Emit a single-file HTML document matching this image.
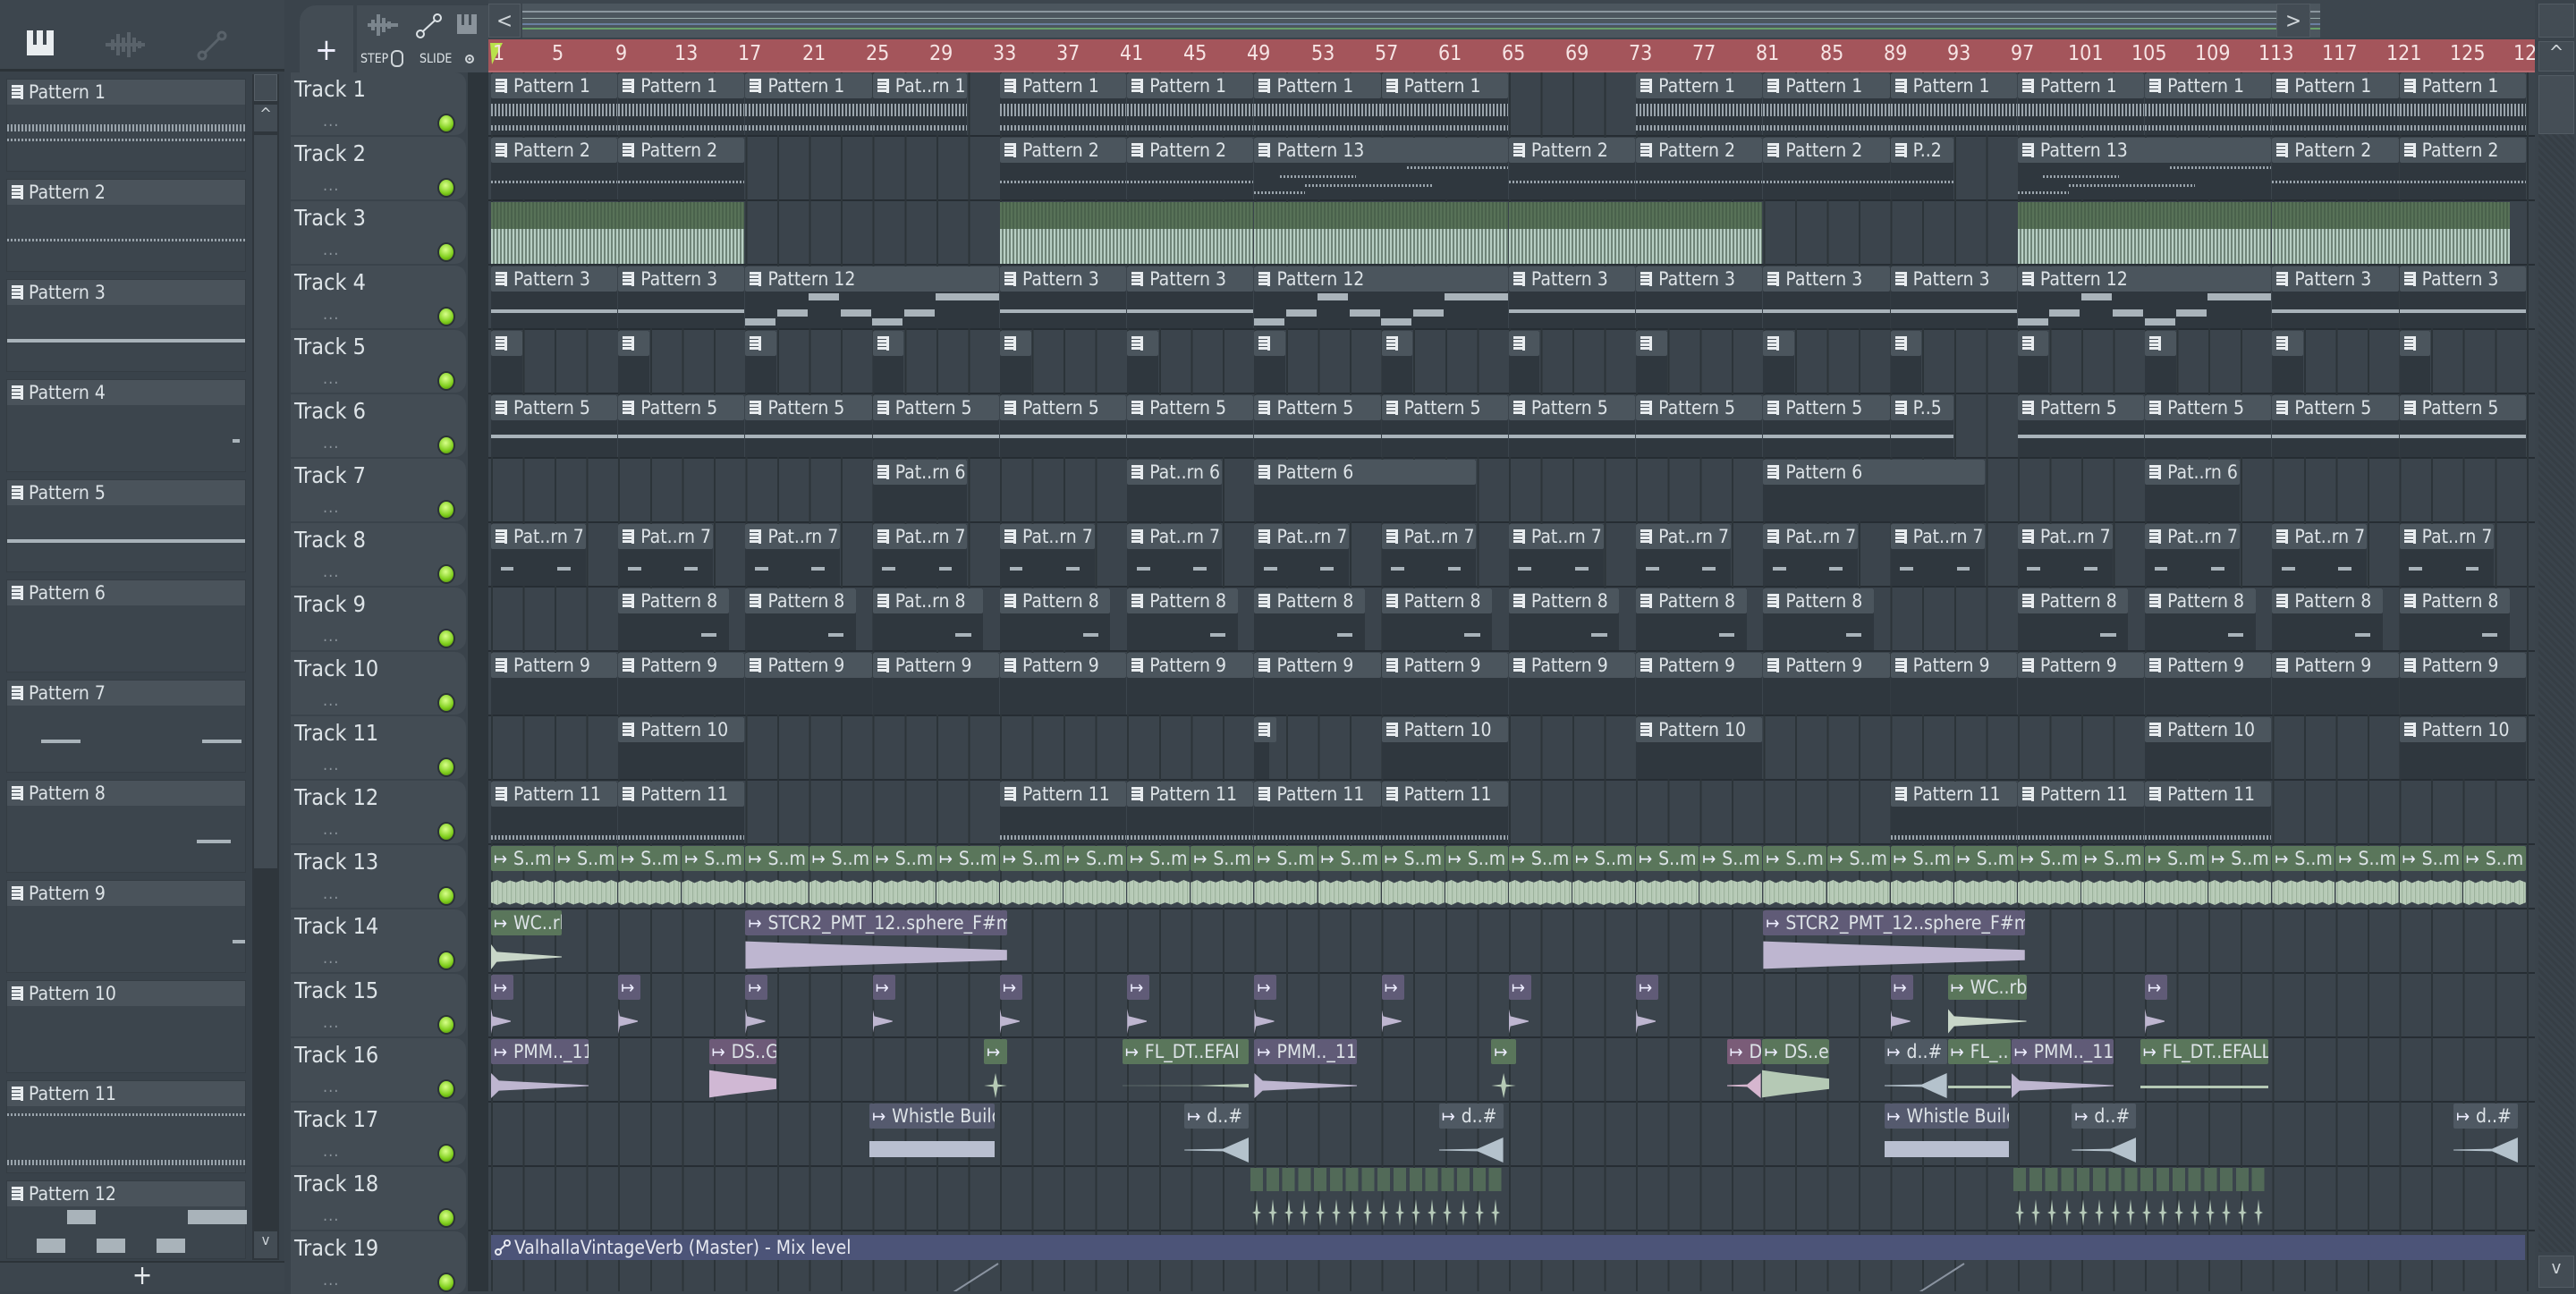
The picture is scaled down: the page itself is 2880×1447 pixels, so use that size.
<!DOCTYPE html>
<html><head><meta charset="utf-8"><style>
*{margin:0;padding:0;box-sizing:border-box}
body{width:2880px;height:1444px;overflow:hidden;background:#3a434b;font-family:"DejaVu Sans Condensed","Liberation Sans Narrow","Liberation Sans",sans-serif;color:#dde3e7;position:relative}
.abs{position:absolute}
#left{left:0;top:0;width:318px;height:1444px;background:#39424a}
#ltool{left:0;top:0;width:318px;height:80px;background:#3d464e;border-bottom:3px solid #2c3338}
.pi{left:7px;width:268px;height:104px;background:#3c454d;border:1px solid #343c43}
.pi b{display:block;height:28px;background:#4a535b;font-weight:normal;font-size:21px;line-height:28px;padding-left:24px;position:relative;color:#dde3e7}
.pi b::before,.c b::before{content:"";position:absolute;left:5px;top:6px;width:10px;height:16px;background:repeating-linear-gradient(#e8ecef 0 3px,#4a535b 3px 4px);border-right:3px solid #e8ecef}
#lsb{left:282px;top:83px;width:30px;height:1326px;background:#2f363c}
#tracks{left:323px;top:81px;width:200px;height:1363px}
.th{position:absolute;left:2px;width:196px;height:70px;background:#434c54;border-radius:0 12px 12px 0}
.th span{position:absolute;left:4px;top:4px;font-size:25px}
.th i{position:absolute;left:36px;top:44px;font-style:normal;font-size:18px;color:#8a939b;letter-spacing:1px}
.th u{position:absolute;left:164px;top:46px;width:20px;height:22px;border-radius:50%;background:radial-gradient(circle at 45% 35%,#d8ff8a,#7fce1c 60%,#4a7a10);border:2px solid #2a3136}
#strip{left:523px;top:81px;width:23px;height:1363px;background:#2d353b}
#ruler{left:546px;top:44px;width:2288px;height:37px;background:#a4555b;overflow:hidden;border-bottom:2px solid #b56a70}
#ruler span{position:absolute;top:3px;font-size:23px;color:#f6e4e4}
#over{left:546px;top:0;width:2288px;height:42px;background:#3d464e}
#grid{left:546px;top:81px;width:2288px;height:1363px;overflow:hidden;
background:repeating-linear-gradient(90deg,transparent 0 3px,#2c3439 3px 5px,transparent 5px 35.56px),
repeating-linear-gradient(transparent 0 70px,#262d33 70px 72px),#3b444c}
.r{position:absolute;left:0;width:2288px;height:72px}
.c{position:absolute;top:1px;height:69px;left:calc(3px + (var(--b) - 1)*17.78px);width:calc(var(--w)*17.78px - 1px);background:#2f373e}
.c b{display:block;height:28px;background:#4b555d;font-weight:normal;font-size:21px;line-height:28px;padding-left:25px;white-space:nowrap;overflow:hidden;position:relative;border-radius:2px;color:#dde3e7}
.c.a b::before,.c.u b::before,.c.g b::before,.c.k b::before{content:"↦";background:none;border:0;width:auto;height:auto;top:0;left:3px;font-size:20px;color:#eef}
.a{background:transparent}.a b{background:#5a765b}
.u{background:transparent}.u b{background:#605b77}
.k{background:transparent}.k b{background:#4f5963}
.wav{position:absolute;left:0;right:0;top:38px;height:28px;background:#b5c9b5}
.t13{background:repeating-linear-gradient(90deg,#b9ccb9 0 2px,#9cb29c 2px 3px,#b5c9b5 3px 5px);clip-path:polygon(0 10%,10% 0,20% 12%,30% 2%,40% 10%,50% 0,60% 8%,70% 2%,80% 12%,90% 0,100% 10%,100% 90%,90% 100%,80% 88%,70% 98%,60% 90%,50% 100%,40% 90%,30% 98%,20% 88%,10% 100%,0 90%)}
.u .wav{background:#beb6d0}
.k .wav{background:#b4c2cc}
.dec{clip-path:polygon(0 0,8% 30%,100% 48%,100% 52%,8% 70%,0 100%)}
.ris{clip-path:polygon(0 48%,60% 45%,100% 0,100% 100%,60% 55%,0 52%)}
.swl{top:34px;height:32px;clip-path:polygon(0 2%,30% 12%,100% 32%,100% 68%,30% 88%,0 98%)}
.dash{position:absolute;left:0;right:0;height:3px;background:repeating-linear-gradient(90deg,#9aa4ac 0 2px,transparent 2px 4px)}
.ln{position:absolute;height:4px;background:#a9b3ba}
.sp{position:absolute;top:36px;width:10px;height:30px;background:#b5c9b8;clip-path:polygon(50% 0,65% 45%,100% 50%,65% 55%,50% 100%,35% 55%,0 50%,35% 45%)}
</style></head><body>

<div id="left" class="abs">
 <div id="ltool" class="abs">
  <svg class="abs" style="left:30px;top:34px" width="30" height="30"><rect x="0" y="0" width="30" height="28" fill="#e8ecef"/><rect x="7" y="0" width="4" height="16" fill="#3d464e"/><rect x="18" y="0" width="4" height="16" fill="#3d464e"/></svg>
  <svg class="abs" style="left:118px;top:34px" width="44" height="32"><path d="M0 16h44M8 10v12M14 4v24M20 8v16M26 2v28M32 8v16M38 12v8" stroke="#59626a" stroke-width="4"/></svg>
  <svg class="abs" style="left:220px;top:34px" width="34" height="34"><circle cx="6" cy="28" r="4" fill="none" stroke="#59626a" stroke-width="3"/><circle cx="28" cy="6" r="4" fill="none" stroke="#59626a" stroke-width="3"/><path d="M9 25L25 9" stroke="#59626a" stroke-width="3"/></svg>
 </div>
 <div class="pi abs" style="top:88px"><b>Pattern 1</b><div class="dash" style="top:50px;height:8px"></div><div class="dash" style="top:66px"></div></div>
 <div class="pi abs" style="top:200px"><b>Pattern 2</b><div class="dash" style="top:66px"></div></div>
 <div class="pi abs" style="top:312px"><b>Pattern 3</b><div class="ln" style="top:66px;left:0;right:0"></div></div>
 <div class="pi abs" style="top:424px"><b>Pattern 4</b><div class="ln" style="top:66px;left:252px;width:8px"></div></div>
 <div class="pi abs" style="top:536px"><b>Pattern 5</b><div class="ln" style="top:66px;left:0;right:0"></div></div>
 <div class="pi abs" style="top:648px"><b>Pattern 6</b></div>
 <div class="pi abs" style="top:760px"><b>Pattern 7</b><div class="ln" style="top:66px;left:38px;width:44px"></div><div class="ln" style="top:66px;left:218px;width:44px"></div></div>
 <div class="pi abs" style="top:872px"><b>Pattern 8</b><div class="ln" style="top:66px;left:212px;width:38px"></div></div>
 <div class="pi abs" style="top:984px"><b>Pattern 9</b><div class="ln" style="top:66px;left:252px;width:14px"></div></div>
 <div class="pi abs" style="top:1096px"><b>Pattern 10</b></div>
 <div class="pi abs" style="top:1208px"><b>Pattern 11</b><div class="dash" style="top:36px"></div><div class="dash" style="top:88px;height:6px"></div></div>
 <div class="pi abs" style="top:1320px;height:88px"><b>Pattern 12</b><div class="ln" style="top:32px;left:67px;width:32px;height:16px"></div><div class="ln" style="top:32px;left:202px;width:66px;height:16px"></div><div class="ln" style="top:64px;left:33px;width:32px;height:16px"></div><div class="ln" style="top:64px;left:100px;width:32px;height:16px"></div><div class="ln" style="top:64px;left:167px;width:32px;height:16px"></div></div>
 <div id="lsb" class="abs"><div class="abs" style="left:2px;top:0;width:26px;height:30px;background:#434c54;border:1px solid #555e66"></div><div class="abs" style="left:2px;top:34px;width:26px;height:30px;background:#434c54;color:#cfd5d9;font-size:18px;text-align:center">^</div><div class="abs" style="left:2px;top:68px;width:26px;height:820px;background:#414a52"></div><div class="abs" style="left:2px;top:1294px;width:26px;height:30px;background:#434c54;color:#cfd5d9;font-size:16px;text-align:center">v</div></div>
 <div class="abs" style="left:0;top:1410px;width:318px;height:34px;background:#3c454d;border-top:2px solid #2c3338;text-align:center;font-size:30px;line-height:30px;color:#e6eaed">+</div>
</div>

<div class="abs" style="left:323px;top:0;width:223px;height:81px;background:#3a434b">
 <div class="abs" style="left:12px;top:6px;width:60px;height:75px;background:#434c54;border-radius:18px 0 0 0;text-align:center;font-size:34px;line-height:100px;color:#eef">+</div>
 <div class="abs" style="left:76px;top:6px;width:147px;height:75px;background:#434c54">
  <svg class="abs" style="left:8px;top:8px" width="130" height="30"><path d="M4 14h34M10 8v12M16 2v24M22 6v16M28 10v8" stroke="#7b858d" stroke-width="4"/><circle cx="63" cy="24" r="4" fill="none" stroke="#dde3e7" stroke-width="2"/><circle cx="82" cy="6" r="4" fill="none" stroke="#dde3e7" stroke-width="2"/><path d="M66 21L79 9" stroke="#dde3e7" stroke-width="2"/><rect x="104" y="2" width="22" height="22" fill="#8a939b"/><rect x="109" y="2" width="3" height="12" fill="#434c54"/><rect x="117" y="2" width="3" height="12" fill="#434c54"/></svg>
  <span class="abs" style="left:4px;top:52px;font-size:14px">STEP</span><span class="abs" style="left:38px;top:50px;width:14px;height:19px;border:2px solid #cfd5d9;border-radius:6px"></span>
  <span class="abs" style="left:70px;top:52px;font-size:14px">SLIDE</span><span class="abs" style="left:121px;top:55px;width:10px;height:10px;border:2px solid #cfd5d9;border-radius:50%;background:radial-gradient(#cfd5d9 30%,transparent 40%)"></span>
 </div>
</div>

<div id="over" class="abs">
 <div class="abs" style="left:0;top:4px;width:36px;height:38px;background:#434c54;border:1px solid #525b63;color:#cfd5d9;font-size:24px;text-align:center;line-height:36px">&lt;</div>
 <div class="abs" style="left:38px;top:4px;width:2010px;height:38px;background:#4c565e;background-image:linear-gradient(transparent 8px,#8b969e 8px 10px,transparent 10px 16px,#9aa 16px 17px,transparent 17px 22px,#6a7fa0 22px 24px,transparent 24px 27px,#69a06a 27px 29px,transparent 29px)"></div>
 <div class="abs" style="left:1999px;top:4px;width:38px;height:38px;background:#434c54;border:1px solid #525b63;color:#cfd5d9;font-size:24px;text-align:center;line-height:36px">&gt;</div>
</div>
<div class="abs" style="left:2834px;top:0;width:46px;height:1444px;background:#3a434b">
 <div class="abs" style="left:4px;top:4px;width:40px;height:38px;background:#434c54;border:1px solid #525b63"></div>
 <div class="abs" style="left:4px;top:46px;width:40px;height:34px;background:#434c54;border:1px solid #525b63;color:#cfd5d9;text-align:center;font-size:22px">^</div>
 <div class="abs" style="left:4px;top:84px;width:40px;height:66px;background:#454e56;border:1px solid #525b63"></div>
 <div class="abs" style="left:4px;top:150px;width:40px;height:1250px;background:repeating-linear-gradient(45deg,#363e45 0 3px,#3a434b 3px 6px)"></div>
 <div class="abs" style="left:4px;top:1404px;width:40px;height:36px;background:#434c54;border:1px solid #525b63;color:#cfd5d9;text-align:center;font-size:20px">v</div>
</div>

<div id="ruler" class="abs">
<svg class="abs" style="left:0;top:4px" width="18" height="26"><path d="M2 0h14L4 24z" fill="#b9e24a"/></svg>
<span style="left:5px">1</span><span style="left:71px">5</span><span style="left:142px">9</span><span style="left:208px">13</span><span style="left:279px">17</span><span style="left:351px">21</span><span style="left:422px">25</span><span style="left:493px">29</span><span style="left:564px">33</span><span style="left:635px">37</span><span style="left:706px">41</span><span style="left:777px">45</span><span style="left:848px">49</span><span style="left:920px">53</span><span style="left:991px">57</span><span style="left:1062px">61</span><span style="left:1133px">65</span><span style="left:1204px">69</span><span style="left:1275px">73</span><span style="left:1346px">77</span><span style="left:1417px">81</span><span style="left:1489px">85</span><span style="left:1560px">89</span><span style="left:1631px">93</span><span style="left:1702px">97</span><span style="left:1766px">101</span><span style="left:1837px">105</span><span style="left:1908px">109</span><span style="left:1979px">113</span><span style="left:2050px">117</span><span style="left:2122px">121</span><span style="left:2193px">125</span><span style="left:2264px">129</span>
</div>

<div id="strip" class="abs"></div>
<div id="tracks" class="abs">
<div class="th" style="top:0"><span>Track 1</span><i>...</i><u></u></div>
<div class="th" style="top:72px"><span>Track 2</span><i>...</i><u></u></div>
<div class="th" style="top:144px"><span>Track 3</span><i>...</i><u></u></div>
<div class="th" style="top:216px"><span>Track 4</span><i>...</i><u></u></div>
<div class="th" style="top:288px"><span>Track 5</span><i>...</i><u></u></div>
<div class="th" style="top:360px"><span>Track 6</span><i>...</i><u></u></div>
<div class="th" style="top:432px"><span>Track 7</span><i>...</i><u></u></div>
<div class="th" style="top:504px"><span>Track 8</span><i>...</i><u></u></div>
<div class="th" style="top:576px"><span>Track 9</span><i>...</i><u></u></div>
<div class="th" style="top:648px"><span>Track 10</span><i>...</i><u></u></div>
<div class="th" style="top:720px"><span>Track 11</span><i>...</i><u></u></div>
<div class="th" style="top:792px"><span>Track 12</span><i>...</i><u></u></div>
<div class="th" style="top:864px"><span>Track 13</span><i>...</i><u></u></div>
<div class="th" style="top:936px"><span>Track 14</span><i>...</i><u></u></div>
<div class="th" style="top:1008px"><span>Track 15</span><i>...</i><u></u></div>
<div class="th" style="top:1080px"><span>Track 16</span><i>...</i><u></u></div>
<div class="th" style="top:1152px"><span>Track 17</span><i>...</i><u></u></div>
<div class="th" style="top:1224px"><span>Track 18</span><i>...</i><u></u></div>
<div class="th" style="top:1296px"><span>Track 19</span><i>...</i><u></u></div>
</div>

<div id="grid" class="abs">
<!-- Track 1 -->
<div class="r" style="top:0">
<div class="c" style="--b:1;--w:8"><b>Pattern 1</b><div class="dash" style="top:34px;height:14px"></div><div class="dash" style="top:58px;height:6px"></div></div>
<div class="c" style="--b:9;--w:8"><b>Pattern 1</b><div class="dash" style="top:34px;height:14px"></div><div class="dash" style="top:58px;height:6px"></div></div>
<div class="c" style="--b:17;--w:8"><b>Pattern 1</b><div class="dash" style="top:34px;height:14px"></div><div class="dash" style="top:58px;height:6px"></div></div>
<div class="c" style="--b:25;--w:6"><b>Pat..rn 1</b><div class="dash" style="top:34px;height:14px"></div><div class="dash" style="top:58px;height:6px"></div></div>
<div class="c" style="--b:33;--w:8"><b>Pattern 1</b><div class="dash" style="top:34px;height:14px"></div><div class="dash" style="top:58px;height:6px"></div></div>
<div class="c" style="--b:41;--w:8"><b>Pattern 1</b><div class="dash" style="top:34px;height:14px"></div><div class="dash" style="top:58px;height:6px"></div></div>
<div class="c" style="--b:49;--w:8"><b>Pattern 1</b><div class="dash" style="top:34px;height:14px"></div><div class="dash" style="top:58px;height:6px"></div></div>
<div class="c" style="--b:57;--w:8"><b>Pattern 1</b><div class="dash" style="top:34px;height:14px"></div><div class="dash" style="top:58px;height:6px"></div></div>
<div class="c" style="--b:73;--w:8"><b>Pattern 1</b><div class="dash" style="top:34px;height:14px"></div><div class="dash" style="top:58px;height:6px"></div></div>
<div class="c" style="--b:81;--w:8"><b>Pattern 1</b><div class="dash" style="top:34px;height:14px"></div><div class="dash" style="top:58px;height:6px"></div></div>
<div class="c" style="--b:89;--w:8"><b>Pattern 1</b><div class="dash" style="top:34px;height:14px"></div><div class="dash" style="top:58px;height:6px"></div></div>
<div class="c" style="--b:97;--w:8"><b>Pattern 1</b><div class="dash" style="top:34px;height:14px"></div><div class="dash" style="top:58px;height:6px"></div></div>
<div class="c" style="--b:105;--w:8"><b>Pattern 1</b><div class="dash" style="top:34px;height:14px"></div><div class="dash" style="top:58px;height:6px"></div></div>
<div class="c" style="--b:113;--w:8"><b>Pattern 1</b><div class="dash" style="top:34px;height:14px"></div><div class="dash" style="top:58px;height:6px"></div></div>
<div class="c" style="--b:121;--w:8"><b>Pattern 1</b><div class="dash" style="top:34px;height:14px"></div><div class="dash" style="top:58px;height:6px"></div></div>
</div>
<!-- Track 2 -->
<div class="r" style="top:72px">
<div class="c" style="--b:1;--w:8"><b>Pattern 2</b><div class="dash" style="top:48px"></div></div>
<div class="c" style="--b:9;--w:8"><b>Pattern 2</b><div class="dash" style="top:48px"></div></div>
<div class="c" style="--b:33;--w:8"><b>Pattern 2</b><div class="dash" style="top:48px"></div></div>
<div class="c" style="--b:41;--w:8"><b>Pattern 2</b><div class="dash" style="top:48px"></div></div>
<div class="c" style="--b:49;--w:16"><b>Pattern 13</b><div class="dash" style="top:32px;left:60%"></div><div class="dash" style="top:42px;left:10%;right:60%"></div><div class="dash" style="top:52px;left:20%;right:30%"></div><div class="dash" style="top:60px;left:0;right:80%"></div></div>
<div class="c" style="--b:65;--w:8"><b>Pattern 2</b><div class="dash" style="top:48px"></div></div>
<div class="c" style="--b:73;--w:8"><b>Pattern 2</b><div class="dash" style="top:48px"></div></div>
<div class="c" style="--b:81;--w:8"><b>Pattern 2</b><div class="dash" style="top:48px"></div></div>
<div class="c" style="--b:89;--w:4"><b>P..2</b><div class="dash" style="top:48px"></div></div>
<div class="c" style="--b:97;--w:16"><b>Pattern 13</b><div class="dash" style="top:32px;left:60%"></div><div class="dash" style="top:42px;left:10%;right:60%"></div><div class="dash" style="top:52px;left:20%;right:30%"></div><div class="dash" style="top:60px;left:0;right:80%"></div></div>
<div class="c" style="--b:113;--w:8"><b>Pattern 2</b><div class="dash" style="top:48px"></div></div>
<div class="c" style="--b:121;--w:8"><b>Pattern 2</b><div class="dash" style="top:48px"></div></div>
</div>
<!-- Track 3 -->
<div class="r" style="top:144px">
<div class="c" style="--b:1;--w:16;background:repeating-linear-gradient(90deg,#b8cfc4 0 2px,#6f8478 2px 4px)"><div style="height:30px;background:repeating-linear-gradient(90deg,#587258 0 2px,#4a624c 2px 4px)"></div></div>
<div class="c" style="--b:33;--w:16;background:repeating-linear-gradient(90deg,#b8cfc4 0 2px,#6f8478 2px 4px)"><div style="height:30px;background:repeating-linear-gradient(90deg,#587258 0 2px,#4a624c 2px 4px)"></div></div>
<div class="c" style="--b:49;--w:16;background:repeating-linear-gradient(90deg,#b8cfc4 0 2px,#6f8478 2px 4px)"><div style="height:30px;background:repeating-linear-gradient(90deg,#587258 0 2px,#4a624c 2px 4px)"></div></div>
<div class="c" style="--b:65;--w:16;background:repeating-linear-gradient(90deg,#b8cfc4 0 2px,#6f8478 2px 4px)"><div style="height:30px;background:repeating-linear-gradient(90deg,#587258 0 2px,#4a624c 2px 4px)"></div></div>
<div class="c" style="--b:97;--w:16;background:repeating-linear-gradient(90deg,#b8cfc4 0 2px,#6f8478 2px 4px)"><div style="height:30px;background:repeating-linear-gradient(90deg,#587258 0 2px,#4a624c 2px 4px)"></div></div>
<div class="c" style="--b:113;--w:15;background:repeating-linear-gradient(90deg,#b8cfc4 0 2px,#6f8478 2px 4px)"><div style="height:30px;background:repeating-linear-gradient(90deg,#587258 0 2px,#4a624c 2px 4px)"></div></div>
</div>
<!-- Track 4 -->
<div class="r" style="top:216px">
<div class="c" style="--b:1;--w:8"><b>Pattern 3</b><div class="ln" style="top:48px;left:0;right:0"></div></div>
<div class="c" style="--b:9;--w:8"><b>Pattern 3</b><div class="ln" style="top:48px;left:0;right:0"></div></div>
<div class="c" style="--b:17;--w:16"><b>Pattern 12</b><div class="ln" style="top:58px;left:0;width:12%;height:8px"></div><div class="ln" style="top:48px;left:12.5%;width:12%;height:8px"></div><div class="ln" style="top:30px;left:25%;width:12%;height:8px"></div><div class="ln" style="top:48px;left:37.5%;width:12%;height:8px"></div><div class="ln" style="top:58px;left:50%;width:12%;height:8px"></div><div class="ln" style="top:48px;left:62.5%;width:12%;height:8px"></div><div class="ln" style="top:30px;left:75%;width:25%;height:8px"></div></div>
<div class="c" style="--b:33;--w:8"><b>Pattern 3</b><div class="ln" style="top:48px;left:0;right:0"></div></div>
<div class="c" style="--b:41;--w:8"><b>Pattern 3</b><div class="ln" style="top:48px;left:0;right:0"></div></div>
<div class="c" style="--b:49;--w:16"><b>Pattern 12</b><div class="ln" style="top:58px;left:0;width:12%;height:8px"></div><div class="ln" style="top:48px;left:12.5%;width:12%;height:8px"></div><div class="ln" style="top:30px;left:25%;width:12%;height:8px"></div><div class="ln" style="top:48px;left:37.5%;width:12%;height:8px"></div><div class="ln" style="top:58px;left:50%;width:12%;height:8px"></div><div class="ln" style="top:48px;left:62.5%;width:12%;height:8px"></div><div class="ln" style="top:30px;left:75%;width:25%;height:8px"></div></div>
<div class="c" style="--b:65;--w:8"><b>Pattern 3</b><div class="ln" style="top:48px;left:0;right:0"></div></div>
<div class="c" style="--b:73;--w:8"><b>Pattern 3</b><div class="ln" style="top:48px;left:0;right:0"></div></div>
<div class="c" style="--b:81;--w:8"><b>Pattern 3</b><div class="ln" style="top:48px;left:0;right:0"></div></div>
<div class="c" style="--b:89;--w:8"><b>Pattern 3</b><div class="ln" style="top:48px;left:0;right:0"></div></div>
<div class="c" style="--b:97;--w:16"><b>Pattern 12</b><div class="ln" style="top:58px;left:0;width:12%;height:8px"></div><div class="ln" style="top:48px;left:12.5%;width:12%;height:8px"></div><div class="ln" style="top:30px;left:25%;width:12%;height:8px"></div><div class="ln" style="top:48px;left:37.5%;width:12%;height:8px"></div><div class="ln" style="top:58px;left:50%;width:12%;height:8px"></div><div class="ln" style="top:48px;left:62.5%;width:12%;height:8px"></div><div class="ln" style="top:30px;left:75%;width:25%;height:8px"></div></div>
<div class="c" style="--b:113;--w:8"><b>Pattern 3</b><div class="ln" style="top:48px;left:0;right:0"></div></div>
<div class="c" style="--b:121;--w:8"><b>Pattern 3</b><div class="ln" style="top:48px;left:0;right:0"></div></div>
</div>
<!-- Track 5 -->
<div class="r" style="top:288px">
<div class="c" style="--b:1;--w:2"><b></b></div><div class="c" style="--b:9;--w:2"><b></b></div><div class="c" style="--b:17;--w:2"><b></b></div><div class="c" style="--b:25;--w:2"><b></b></div><div class="c" style="--b:33;--w:2"><b></b></div><div class="c" style="--b:41;--w:2"><b></b></div><div class="c" style="--b:49;--w:2"><b></b></div><div class="c" style="--b:57;--w:2"><b></b></div><div class="c" style="--b:65;--w:2"><b></b></div><div class="c" style="--b:73;--w:2"><b></b></div><div class="c" style="--b:81;--w:2"><b></b></div><div class="c" style="--b:89;--w:2"><b></b></div><div class="c" style="--b:97;--w:2"><b></b></div><div class="c" style="--b:105;--w:2"><b></b></div><div class="c" style="--b:113;--w:2"><b></b></div><div class="c" style="--b:121;--w:2"><b></b></div>
</div>
<!-- Track 6 -->
<div class="r" style="top:360px">
<div class="c" style="--b:1;--w:8"><b>Pattern 5</b><div class="ln" style="top:44px;left:0;right:0"></div></div>
<div class="c" style="--b:9;--w:8"><b>Pattern 5</b><div class="ln" style="top:44px;left:0;right:0"></div></div>
<div class="c" style="--b:17;--w:8"><b>Pattern 5</b><div class="ln" style="top:44px;left:0;right:0"></div></div>
<div class="c" style="--b:25;--w:8"><b>Pattern 5</b><div class="ln" style="top:44px;left:0;right:0"></div></div>
<div class="c" style="--b:33;--w:8"><b>Pattern 5</b><div class="ln" style="top:44px;left:0;right:0"></div></div>
<div class="c" style="--b:41;--w:8"><b>Pattern 5</b><div class="ln" style="top:44px;left:0;right:0"></div></div>
<div class="c" style="--b:49;--w:8"><b>Pattern 5</b><div class="ln" style="top:44px;left:0;right:0"></div></div>
<div class="c" style="--b:57;--w:8"><b>Pattern 5</b><div class="ln" style="top:44px;left:0;right:0"></div></div>
<div class="c" style="--b:65;--w:8"><b>Pattern 5</b><div class="ln" style="top:44px;left:0;right:0"></div></div>
<div class="c" style="--b:73;--w:8"><b>Pattern 5</b><div class="ln" style="top:44px;left:0;right:0"></div></div>
<div class="c" style="--b:81;--w:8"><b>Pattern 5</b><div class="ln" style="top:44px;left:0;right:0"></div></div>
<div class="c" style="--b:89;--w:4"><b>P..5</b><div class="ln" style="top:44px;left:0;right:0"></div></div>
<div class="c" style="--b:97;--w:8"><b>Pattern 5</b><div class="ln" style="top:44px;left:0;right:0"></div></div>
<div class="c" style="--b:105;--w:8"><b>Pattern 5</b><div class="ln" style="top:44px;left:0;right:0"></div></div>
<div class="c" style="--b:113;--w:8"><b>Pattern 5</b><div class="ln" style="top:44px;left:0;right:0"></div></div>
<div class="c" style="--b:121;--w:8"><b>Pattern 5</b><div class="ln" style="top:44px;left:0;right:0"></div></div>
</div>
<!-- Track 7 -->
<div class="r" style="top:432px">
<div class="c" style="--b:25;--w:6"><b>Pat..rn 6</b></div>
<div class="c" style="--b:41;--w:6"><b>Pat..rn 6</b></div>
<div class="c" style="--b:49;--w:14"><b>Pattern 6</b></div>
<div class="c" style="--b:81;--w:14"><b>Pattern 6</b></div>
<div class="c" style="--b:105;--w:6"><b>Pat..rn 6</b></div>
</div>
<!-- Track 8 -->
<div class="r" style="top:504px">
<div class="c" style="--b:1;--w:6"><b>Pat..rn 7</b><div class="ln" style="top:48px;left:10%;width:14%"></div><div class="ln" style="top:48px;left:70%;width:14%"></div></div>
<div class="c" style="--b:9;--w:6"><b>Pat..rn 7</b><div class="ln" style="top:48px;left:10%;width:14%"></div><div class="ln" style="top:48px;left:70%;width:14%"></div></div>
<div class="c" style="--b:17;--w:6"><b>Pat..rn 7</b><div class="ln" style="top:48px;left:10%;width:14%"></div><div class="ln" style="top:48px;left:70%;width:14%"></div></div>
<div class="c" style="--b:25;--w:6"><b>Pat..rn 7</b><div class="ln" style="top:48px;left:10%;width:14%"></div><div class="ln" style="top:48px;left:70%;width:14%"></div></div>
<div class="c" style="--b:33;--w:6"><b>Pat..rn 7</b><div class="ln" style="top:48px;left:10%;width:14%"></div><div class="ln" style="top:48px;left:70%;width:14%"></div></div>
<div class="c" style="--b:41;--w:6"><b>Pat..rn 7</b><div class="ln" style="top:48px;left:10%;width:14%"></div><div class="ln" style="top:48px;left:70%;width:14%"></div></div>
<div class="c" style="--b:49;--w:6"><b>Pat..rn 7</b><div class="ln" style="top:48px;left:10%;width:14%"></div><div class="ln" style="top:48px;left:70%;width:14%"></div></div>
<div class="c" style="--b:57;--w:6"><b>Pat..rn 7</b><div class="ln" style="top:48px;left:10%;width:14%"></div><div class="ln" style="top:48px;left:70%;width:14%"></div></div>
<div class="c" style="--b:65;--w:6"><b>Pat..rn 7</b><div class="ln" style="top:48px;left:10%;width:14%"></div><div class="ln" style="top:48px;left:70%;width:14%"></div></div>
<div class="c" style="--b:73;--w:6"><b>Pat..rn 7</b><div class="ln" style="top:48px;left:10%;width:14%"></div><div class="ln" style="top:48px;left:70%;width:14%"></div></div>
<div class="c" style="--b:81;--w:6"><b>Pat..rn 7</b><div class="ln" style="top:48px;left:10%;width:14%"></div><div class="ln" style="top:48px;left:70%;width:14%"></div></div>
<div class="c" style="--b:89;--w:6"><b>Pat..rn 7</b><div class="ln" style="top:48px;left:10%;width:14%"></div><div class="ln" style="top:48px;left:70%;width:14%"></div></div>
<div class="c" style="--b:97;--w:6"><b>Pat..rn 7</b><div class="ln" style="top:48px;left:10%;width:14%"></div><div class="ln" style="top:48px;left:70%;width:14%"></div></div>
<div class="c" style="--b:105;--w:6"><b>Pat..rn 7</b><div class="ln" style="top:48px;left:10%;width:14%"></div><div class="ln" style="top:48px;left:70%;width:14%"></div></div>
<div class="c" style="--b:113;--w:6"><b>Pat..rn 7</b><div class="ln" style="top:48px;left:10%;width:14%"></div><div class="ln" style="top:48px;left:70%;width:14%"></div></div>
<div class="c" style="--b:121;--w:6"><b>Pat..rn 7</b><div class="ln" style="top:48px;left:10%;width:14%"></div><div class="ln" style="top:48px;left:70%;width:14%"></div></div>
</div>
<!-- Track 9 -->
<div class="r" style="top:576px">
<div class="c" style="--b:9;--w:7"><b>Pattern 8</b><div class="ln" style="top:50px;left:75%;width:14%"></div></div>
<div class="c" style="--b:17;--w:7"><b>Pattern 8</b><div class="ln" style="top:50px;left:75%;width:14%"></div></div>
<div class="c" style="--b:25;--w:7"><b>Pat..rn 8</b><div class="ln" style="top:50px;left:75%;width:14%"></div></div>
<div class="c" style="--b:33;--w:7"><b>Pattern 8</b><div class="ln" style="top:50px;left:75%;width:14%"></div></div>
<div class="c" style="--b:41;--w:7"><b>Pattern 8</b><div class="ln" style="top:50px;left:75%;width:14%"></div></div>
<div class="c" style="--b:49;--w:7"><b>Pattern 8</b><div class="ln" style="top:50px;left:75%;width:14%"></div></div>
<div class="c" style="--b:57;--w:7"><b>Pattern 8</b><div class="ln" style="top:50px;left:75%;width:14%"></div></div>
<div class="c" style="--b:65;--w:7"><b>Pattern 8</b><div class="ln" style="top:50px;left:75%;width:14%"></div></div>
<div class="c" style="--b:73;--w:7"><b>Pattern 8</b><div class="ln" style="top:50px;left:75%;width:14%"></div></div>
<div class="c" style="--b:81;--w:7"><b>Pattern 8</b><div class="ln" style="top:50px;left:75%;width:14%"></div></div>
<div class="c" style="--b:97;--w:7"><b>Pattern 8</b><div class="ln" style="top:50px;left:75%;width:14%"></div></div>
<div class="c" style="--b:105;--w:7"><b>Pattern 8</b><div class="ln" style="top:50px;left:75%;width:14%"></div></div>
<div class="c" style="--b:113;--w:7"><b>Pattern 8</b><div class="ln" style="top:50px;left:75%;width:14%"></div></div>
<div class="c" style="--b:121;--w:7"><b>Pattern 8</b><div class="ln" style="top:50px;left:75%;width:14%"></div></div>
</div>
<!-- Track 10 -->
<div class="r" style="top:648px">
<div class="c" style="--b:1;--w:8"><b>Pattern 9</b></div><div class="c" style="--b:9;--w:8"><b>Pattern 9</b></div><div class="c" style="--b:17;--w:8"><b>Pattern 9</b></div><div class="c" style="--b:25;--w:8"><b>Pattern 9</b></div><div class="c" style="--b:33;--w:8"><b>Pattern 9</b></div><div class="c" style="--b:41;--w:8"><b>Pattern 9</b></div><div class="c" style="--b:49;--w:8"><b>Pattern 9</b></div><div class="c" style="--b:57;--w:8"><b>Pattern 9</b></div><div class="c" style="--b:65;--w:8"><b>Pattern 9</b></div><div class="c" style="--b:73;--w:8"><b>Pattern 9</b></div><div class="c" style="--b:81;--w:8"><b>Pattern 9</b></div><div class="c" style="--b:89;--w:8"><b>Pattern 9</b></div><div class="c" style="--b:97;--w:8"><b>Pattern 9</b></div><div class="c" style="--b:105;--w:8"><b>Pattern 9</b></div><div class="c" style="--b:113;--w:8"><b>Pattern 9</b></div><div class="c" style="--b:121;--w:8"><b>Pattern 9</b></div>
</div>
<!-- Track 11 -->
<div class="r" style="top:720px">
<div class="c" style="--b:9;--w:8"><b>Pattern 10</b></div>
<div class="c" style="--b:49;--w:1"><b></b></div>
<div class="c" style="--b:57;--w:8"><b>Pattern 10</b></div>
<div class="c" style="--b:73;--w:8"><b>Pattern 10</b></div>
<div class="c" style="--b:105;--w:8"><b>Pattern 10</b></div>
<div class="c" style="--b:121;--w:8"><b>Pattern 10</b></div>
</div>
<!-- Track 12 -->
<div class="r" style="top:792px">
<div class="c" style="--b:1;--w:8"><b>Pattern 11</b><div class="dash" style="top:60px;height:5px"></div></div>
<div class="c" style="--b:9;--w:8"><b>Pattern 11</b><div class="dash" style="top:60px;height:5px"></div></div>
<div class="c" style="--b:33;--w:8"><b>Pattern 11</b><div class="dash" style="top:60px;height:5px"></div></div>
<div class="c" style="--b:41;--w:8"><b>Pattern 11</b><div class="dash" style="top:60px;height:5px"></div></div>
<div class="c" style="--b:49;--w:8"><b>Pattern 11</b><div class="dash" style="top:60px;height:5px"></div></div>
<div class="c" style="--b:57;--w:8"><b>Pattern 11</b><div class="dash" style="top:60px;height:5px"></div></div>
<div class="c" style="--b:89;--w:8"><b>Pattern 11</b><div class="dash" style="top:60px;height:5px"></div></div>
<div class="c" style="--b:97;--w:8"><b>Pattern 11</b><div class="dash" style="top:60px;height:5px"></div></div>
<div class="c" style="--b:105;--w:8"><b>Pattern 11</b><div class="dash" style="top:60px;height:5px"></div></div>
</div>
<!-- Track 13 -->
<div class="r" style="top:864px">
<div class="c a" style="--b:1;--w:4"><b>S..m</b><div class="wav t13"></div></div><div class="c a" style="--b:5;--w:4"><b>S..m</b><div class="wav t13"></div></div><div class="c a" style="--b:9;--w:4"><b>S..m</b><div class="wav t13"></div></div><div class="c a" style="--b:13;--w:4"><b>S..m</b><div class="wav t13"></div></div><div class="c a" style="--b:17;--w:4"><b>S..m</b><div class="wav t13"></div></div><div class="c a" style="--b:21;--w:4"><b>S..m</b><div class="wav t13"></div></div><div class="c a" style="--b:25;--w:4"><b>S..m</b><div class="wav t13"></div></div><div class="c a" style="--b:29;--w:4"><b>S..m</b><div class="wav t13"></div></div><div class="c a" style="--b:33;--w:4"><b>S..m</b><div class="wav t13"></div></div><div class="c a" style="--b:37;--w:4"><b>S..m</b><div class="wav t13"></div></div><div class="c a" style="--b:41;--w:4"><b>S..m</b><div class="wav t13"></div></div><div class="c a" style="--b:45;--w:4"><b>S..m</b><div class="wav t13"></div></div><div class="c a" style="--b:49;--w:4"><b>S..m</b><div class="wav t13"></div></div><div class="c a" style="--b:53;--w:4"><b>S..m</b><div class="wav t13"></div></div><div class="c a" style="--b:57;--w:4"><b>S..m</b><div class="wav t13"></div></div><div class="c a" style="--b:61;--w:4"><b>S..m</b><div class="wav t13"></div></div><div class="c a" style="--b:65;--w:4"><b>S..m</b><div class="wav t13"></div></div><div class="c a" style="--b:69;--w:4"><b>S..m</b><div class="wav t13"></div></div><div class="c a" style="--b:73;--w:4"><b>S..m</b><div class="wav t13"></div></div><div class="c a" style="--b:77;--w:4"><b>S..m</b><div class="wav t13"></div></div><div class="c a" style="--b:81;--w:4"><b>S..m</b><div class="wav t13"></div></div><div class="c a" style="--b:85;--w:4"><b>S..m</b><div class="wav t13"></div></div><div class="c a" style="--b:89;--w:4"><b>S..m</b><div class="wav t13"></div></div><div class="c a" style="--b:93;--w:4"><b>S..m</b><div class="wav t13"></div></div><div class="c a" style="--b:97;--w:4"><b>S..m</b><div class="wav t13"></div></div><div class="c a" style="--b:101;--w:4"><b>S..m</b><div class="wav t13"></div></div><div class="c a" style="--b:105;--w:4"><b>S..m</b><div class="wav t13"></div></div><div class="c a" style="--b:109;--w:4"><b>S..m</b><div class="wav t13"></div></div><div class="c a" style="--b:113;--w:4"><b>S..m</b><div class="wav t13"></div></div><div class="c a" style="--b:117;--w:4"><b>S..m</b><div class="wav t13"></div></div><div class="c a" style="--b:121;--w:4"><b>S..m</b><div class="wav t13"></div></div><div class="c a" style="--b:125;--w:4"><b>S..m</b><div class="wav t13"></div></div>
</div>
<!-- Track 14 -->
<div class="r" style="top:936px">
<div class="c a" style="--b:1;--w:4.5"><b>WC..rb</b><div class="wav dec" style="background:#c8d6c8"></div></div>
<div class="c u" style="--b:17;--w:16.5"><b>STCR2_PMT_12..sphere_F#min</b><div class="wav swl"></div></div>
<div class="c u" style="--b:81;--w:16.5"><b>STCR2_PMT_12..sphere_F#min</b><div class="wav swl"></div></div>
</div>
<!-- Track 15 -->
<div class="r" style="top:1008px">
<div class="c u" style="--b:1;--w:1.3"><b></b><div class="wav dec"></div></div><div class="c u" style="--b:9;--w:1.3"><b></b><div class="wav dec"></div></div><div class="c u" style="--b:17;--w:1.3"><b></b><div class="wav dec"></div></div><div class="c u" style="--b:25;--w:1.3"><b></b><div class="wav dec"></div></div><div class="c u" style="--b:33;--w:1.3"><b></b><div class="wav dec"></div></div><div class="c u" style="--b:41;--w:1.3"><b></b><div class="wav dec"></div></div><div class="c u" style="--b:49;--w:1.3"><b></b><div class="wav dec"></div></div><div class="c u" style="--b:57;--w:1.3"><b></b><div class="wav dec"></div></div><div class="c u" style="--b:65;--w:1.3"><b></b><div class="wav dec"></div></div><div class="c u" style="--b:73;--w:1.3"><b></b><div class="wav dec"></div></div><div class="c u" style="--b:89;--w:1.3"><b></b><div class="wav dec"></div></div><div class="c u" style="--b:105;--w:1.3"><b></b><div class="wav dec"></div></div>
<div class="c a" style="--b:92.6;--w:5"><b>WC..rb</b><div class="wav dec" style="background:#c8d6c8"></div></div>
</div>
<!-- Track 16 -->
<div class="r" style="top:1080px">
<div class="c u" style="--b:1;--w:6.2"><b>PMM.._11</b><div class="wav dec"></div></div>
<div class="c u" style="--b:14.7;--w:4.3"><b style="background:#6d5a78">DS..G</b><div class="wav swl" style="background:#d0b8d4"></div></div>
<div class="c a" style="--b:32;--w:1.5"><b></b><div class="wav dec" style="clip-path:polygon(50% 0,60% 45%,100% 50%,60% 55%,50% 100%,40% 55%,0 50%,40% 45%)"></div></div>
<div class="c a" style="--b:40.7;--w:8"><b>FL_DT..EFAI</b><div class="wav ris" style="height:4px;top:50px"></div></div>
<div class="c u" style="--b:49;--w:6.5"><b>PMM.._11</b><div class="wav dec"></div></div>
<div class="c a" style="--b:63.9;--w:1.6"><b></b><div class="wav" style="clip-path:polygon(50% 0,60% 45%,100% 50%,60% 55%,50% 100%,40% 55%,0 50%,40% 45%)"></div></div>
<div class="c u" style="--b:78.7;--w:2.2"><b style="background:#7a5c78">D</b><div class="wav ris" style="background:#d6b6cf"></div></div>
<div class="c a" style="--b:80.9;--w:4.3"><b>DS..e</b><div class="wav swl"></div></div>
<div class="c k" style="--b:88.6;--w:4"><b>d..#</b><div class="wav ris"></div></div>
<div class="c a" style="--b:92.6;--w:4"><b>FL_..</b><div class="wav" style="height:3px;top:52px"></div></div>
<div class="c u" style="--b:96.6;--w:6.5"><b>PMM.._11</b><div class="wav dec"></div></div>
<div class="c a" style="--b:104.7;--w:8.1"><b>FL_DT..EFALL</b><div class="wav" style="height:3px;top:52px"></div></div>
</div>
<!-- Track 17 -->
<div class="r" style="top:1152px">
<div class="c u" style="--b:24.8;--w:7.9"><b style="background:#555a6e">Whistle Build</b><div class="wav" style="top:42px;height:18px;background:#b9bfd0"></div></div>
<div class="c k" style="--b:44.6;--w:4.1"><b>d..#</b><div class="wav ris"></div></div>
<div class="c k" style="--b:60.6;--w:4.1"><b>d..#</b><div class="wav ris"></div></div>
<div class="c u" style="--b:88.6;--w:7.9"><b style="background:#555a6e">Whistle Build</b><div class="wav" style="top:42px;height:18px;background:#b9bfd0"></div></div>
<div class="c k" style="--b:100.4;--w:4.1"><b>d..#</b><div class="wav ris"></div></div>
<div class="c k" style="--b:124.4;--w:4.1"><b>d..#</b><div class="wav ris"></div></div>
</div>
<!-- Track 18 -->
<div class="r" style="top:1224px">
<div class="abs" style="left:852px;top:1px;width:284px;height:26px;background:repeating-linear-gradient(90deg,#526a58 0 14px,transparent 14px 17.78px)"></div>
<div class="abs" style="left:1705px;top:1px;width:284px;height:26px;background:repeating-linear-gradient(90deg,#526a58 0 14px,transparent 14px 17.78px)"></div>
<div class="sp" style="left:854px"></div><div class="sp" style="left:872px"></div><div class="sp" style="left:890px"></div><div class="sp" style="left:907px"></div><div class="sp" style="left:925px"></div><div class="sp" style="left:943px"></div><div class="sp" style="left:961px"></div><div class="sp" style="left:978px"></div><div class="sp" style="left:996px"></div><div class="sp" style="left:1014px"></div><div class="sp" style="left:1032px"></div><div class="sp" style="left:1050px"></div><div class="sp" style="left:1067px"></div><div class="sp" style="left:1085px"></div><div class="sp" style="left:1103px"></div><div class="sp" style="left:1121px"></div>
<div class="sp" style="left:1707px"></div><div class="sp" style="left:1725px"></div><div class="sp" style="left:1743px"></div><div class="sp" style="left:1760px"></div><div class="sp" style="left:1778px"></div><div class="sp" style="left:1796px"></div><div class="sp" style="left:1814px"></div><div class="sp" style="left:1831px"></div><div class="sp" style="left:1849px"></div><div class="sp" style="left:1867px"></div><div class="sp" style="left:1885px"></div><div class="sp" style="left:1903px"></div><div class="sp" style="left:1920px"></div><div class="sp" style="left:1938px"></div><div class="sp" style="left:1956px"></div><div class="sp" style="left:1974px"></div>
</div>
<!-- Track 19 -->
<div class="r" style="top:1296px">
<div class="abs" style="left:3px;top:4px;width:2274px;height:28px;background:#4c5478;font-size:21px;line-height:28px;padding-left:26px;color:#e6e8f0;white-space:nowrap">ValhallaVintageVerb (Master) - Mix level<svg class="abs" style="left:4px;top:5px" width="18" height="18"><circle cx="4" cy="14" r="3" fill="none" stroke="#e6e8f0" stroke-width="2"/><circle cx="14" cy="4" r="3" fill="none" stroke="#e6e8f0" stroke-width="2"/><path d="M6 12L12 6" stroke="#e6e8f0" stroke-width="2"/></svg></div>
<svg class="abs" style="left:0;top:32px" width="2288" height="36"><path d="M520 36L570 4M1600 36L1650 4" stroke="#8a93a0" stroke-width="2"/></svg>
</div>
</div>
</body></html>
